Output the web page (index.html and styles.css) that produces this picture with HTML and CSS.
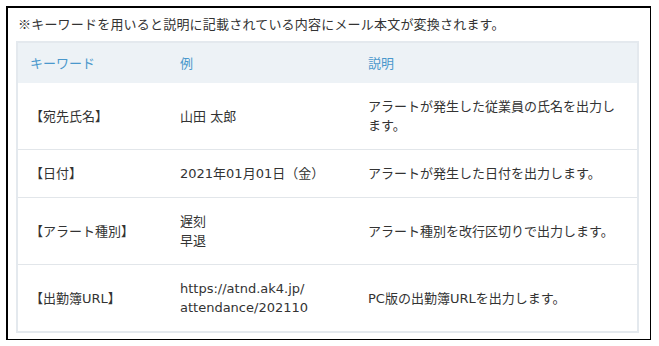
FILE: index.html
```html
<!DOCTYPE html>
<html lang="ja">
<head>
<meta charset="utf-8">
<link rel="stylesheet" href="styles.css">
</head>
<body>
<div class="frame">
  <p class="note">※キーワードを用いると説明に記載されている内容にメール本文が変換されます。</p>
  <table class="kw">
    <colgroup>
      <col class="c1"><col class="c2"><col class="c3">
    </colgroup>
    <thead>
      <tr><th>キーワード</th><th>例</th><th>説明</th></tr>
    </thead>
    <tbody>
      <tr class="first"><td>【宛先氏名】</td><td>山田 太郎</td><td>アラートが発生した従業員の氏名を出力します。</td></tr>
      <tr><td>【日付】</td><td>2021年01月01日（金）</td><td>アラートが発生した日付を出力します。</td></tr>
      <tr><td>【アラート種別】</td><td>遅刻<br>早退</td><td>アラート種別を改行区切りで出力します。</td></tr>
      <tr><td>【出勤簿URL】</td><td>https://atnd.ak4.jp/<br>attendance/202110</td><td>PC版の出勤簿URLを出力します。</td></tr>
    </tbody>
  </table>
</div>
</body>
</html>
```
FILE: styles.css
```css
html, body { margin: 0; padding: 0; background: #fff; }
body {
  font-family: "DejaVu Sans", "Noto Sans CJK JP", sans-serif;
  font-size: 13px;
  line-height: 19px;
  color: #333;
}
.frame {
  margin: 6px 0 0 6px;
  width: 645px;
  box-sizing: border-box;
  border: 2px solid #000;
  border-right-width: 1px;
  border-bottom-width: 1px;
  padding: 6px 11px 6px 8px;
}
.note {
  margin: 0 0 8px 2px;
  font-family: "Noto Sans CJK JP", sans-serif;
  letter-spacing: 0.2px;
}
.kw {
  width: 623px;
  table-layout: fixed;
  border-collapse: separate;
  border-spacing: 0;
  border: 2px solid #e4e9ee;
}
.c1 { width: 150px; }
.c2 { width: 188px; }
.c3 { width: 281px; }
.kw th {
  background: #edf2f6;
  color: #4a98cc;
  font-weight: normal;
  text-align: left;
  padding: 11px 12px 10px;
}
.kw td {
  border-top: 1px solid #e2e6ea;
  padding: 14px 12px;
  vertical-align: middle;
}
.kw tr.first td { border-top: none; }
```
